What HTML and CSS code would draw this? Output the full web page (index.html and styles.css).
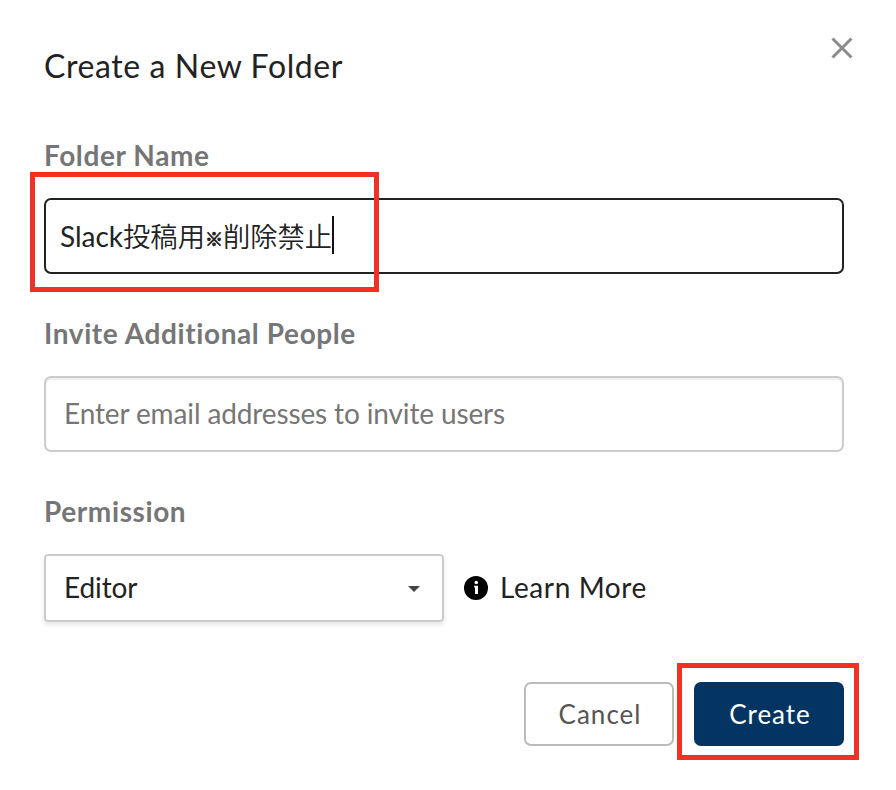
FILE: index.html
```html
<!DOCTYPE html>
<html lang="en">
<head>
<meta charset="utf-8">
<title>Create a New Folder</title>
<link rel="stylesheet" href="styles.css">
</head>
<body>
<form class="dialog">
  <header class="head">
    <h1>Create a New Folder</h1>
    <svg class="close" width="22" height="22" viewBox="0 0 22 22"><path d="M1.5 1.5l19 19M20.5 1.5l-19 19"/></svg>
  </header>
  <section class="field">
    <div class="label">Folder Name</div>
    <div class="box focused"><span class="name">Slack<span class="cjk">投稿用<span class="mark">※</span>削除禁止</span></span><i class="caret"></i></div>
    <i class="highlight highlight-name"></i>
  </section>
  <section class="field">
    <div class="label">Invite Additional People</div>
    <div class="box invite"><span class="placeholder">Enter email addresses to invite users</span></div>
  </section>
  <section class="field">
    <div class="label">Permission</div>
    <div class="row">
      <div class="select"><span class="value">Editor</span><svg class="arrow" width="12" height="6" viewBox="0 0 12 6"><path d="M0 0h12L6 6z" fill="#444"/></svg></div>
      <svg class="info" width="24" height="24" viewBox="0 0 24 24"><circle cx="12" cy="12" r="12"/><circle cx="12.3" cy="6.5" r="1.8" fill="#fff"/><path fill="#fff" d="M10.2 9.8h3.8V18h-3v-6.6h-.8z"/></svg>
      <span class="learn">Learn More</span>
    </div>
  </section>
  <footer class="actions">
    <div class="btn cancel"><span>Cancel</span></div>
    <div class="btn create"><span>Create</span><i class="highlight highlight-create"></i></div>
  </footer>
</form>
</body>
</html>
```
FILE: styles.css
```css
* { box-sizing: border-box; }
body { margin: 0; background: #fff; color: #222; font: 28px/34px Lato, "Noto Sans CJK JP", sans-serif; }
.dialog { width: 896px; height: 790px; padding: 36px 52px 0 44px; overflow: hidden; white-space: nowrap; }
.head { display: flex; justify-content: space-between; height: 102px; margin-right: -9px; }
h1 { margin: 10px 0 0; font-size: 32px; line-height: 40px; font-weight: 400; letter-spacing: .6px; }
.close { margin-top: 1px; }
.close path { stroke: #8c8c8c; stroke-width: 3; fill: none; }
.field { position: relative; height: 178px; }
.label { height: 60px; color: #767676; font-weight: 700; letter-spacing: .6px; }
.box { display: flex; align-items: center; height: 76px; border: 2px solid #ccc; border-radius: 7px; padding: 0 18px; }
.focused { border-color: #222; padding: 0 14px; }
.name { padding-top: 1px; }
.cjk { font-family: "Noto Sans CJK JP", sans-serif; font-size: 27.3px; font-weight: 350; }
.mark { font-size: 18px; -webkit-text-stroke: .9px #222; position: relative; top: -1px; }
.caret { width: 2px; height: 38px; background: #111; margin-top: -2px; }
.invite { box-shadow: inset 0 2px 2px rgba(0,0,0,.08); }
.placeholder { color: #767676; letter-spacing: -.13px; margin-top: -2px; }
.row { display: flex; align-items: center; height: 68px; }
.select { display: flex; align-items: center; justify-content: space-between; width: 400px; height: 68px; border: 2px solid #ccc; border-radius: 4px; padding: 0 22px 0 18px; box-shadow: 0 3px 4px rgba(0,0,0,.1); }
.value, .learn { margin-top: -2px; }
.value { letter-spacing: -.1px; }
.arrow { margin-top: 2px; }
.info { margin: 0 12px 0 20px; }
.learn { letter-spacing: .6px; }
.actions { display: flex; justify-content: flex-end; gap: 20px; margin-top: 10px; }
.btn { position: relative; display: flex; align-items: center; justify-content: center; width: 150px; height: 64px; border-radius: 7px; font-size: 26px; letter-spacing: 1px; padding: 0 0 0 2px; }
.cancel { border: 2px solid #bbb; color: #555; }
.create { background: #043562; color: #fff; }
.highlight { position: absolute; border: 5px solid #f23024; }
.highlight-name { left: -14px; top: 34px; width: 349px; height: 120px; }
.highlight-create { left: -17px; top: -19px; width: 182px; height: 97px; }
```
